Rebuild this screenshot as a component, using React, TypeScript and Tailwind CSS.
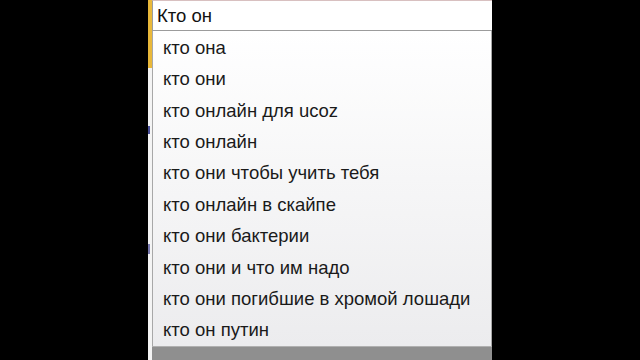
const ITEMS = [
  "кто она",
  "кто они",
  "кто онлайн для ucoz",
  "кто онлайн",
  "кто они чтобы учить тебя",
  "кто онлайн в скайпе",
  "кто они бактерии",
  "кто они и что им надо",
  "кто они погибшие в хромой лошади",
  "кто он путин",
];

export default function App() {
  return (
    <div
      className="flex h-[360px] w-[640px] overflow-hidden bg-black"
      style={{ fontFamily: '"Liberation Sans", Arial, sans-serif' }}
    >
      <div className="w-[148px] shrink-0" />
      {/* page behind the dropdown, barely visible */}
      <div className="flex w-[4px] shrink-0 flex-col bg-[#f4f4f4]">
        <div className="h-[68px] bg-[#e9b83a]" />
        <div className="mt-[58px] h-[8px] w-[2px] bg-[#4a4f9a]" />
        <div className="mt-[110px] h-[10px] w-[2px] bg-[#7a7ab0]" />
      </div>
      <div className="flex w-[340px] shrink-0 flex-col">
        <div className="flex h-[31px] items-center border-t border-b border-l border-[#9c9c9c] border-t-[#d8c0c0] bg-white pl-[4px] text-[18.5px] text-[#111]">
          Кто он
        </div>
        <div className="flex flex-col border-r border-l border-[#a8a8a8] bg-gradient-to-b from-white to-[#ececee] pt-[1px]">
          {ITEMS.map((t) => (
            <div key={t} className="flex h-[31.4px] items-center pl-[10px] text-[18.5px] text-[#1a1a1a]">
              {t}
            </div>
          ))}
        </div>
        <div className="flex-1 border-t border-[#b0b0b0] bg-[#8f8f8f]" />
      </div>
    </div>
  );
}
